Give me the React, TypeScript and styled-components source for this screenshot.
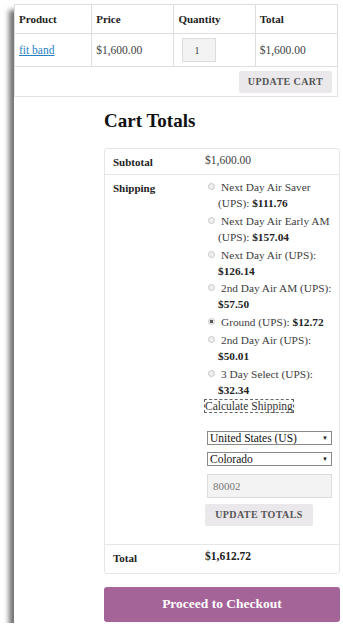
import React from "react";
import styled, { createGlobalStyle } from "styled-components";

const serif = `"Liberation Serif", "DejaVu Serif", serif`;

const GlobalStyle = createGlobalStyle`
  body {
    margin: 0;
    background: #fff;
    font-family: ${serif};
    color: #3d3d3d;
  }
`;

const Frame = styled.div`
  margin: 4px 0 0 14px;
  width: 329px;
  padding-bottom: 1px;
  background: #fff;
  box-shadow: -5px 6px 5px rgba(0, 0, 0, 0.55);
`;

const CartTable = styled.table`
  width: 324px;
  border-collapse: collapse;
  border: 1px solid #e2e2e2;
  font-size: 11.5px;
`;

const HeadCell = styled.th<{ $w: number }>`
  width: ${({ $w }) => $w}px;
  height: 28px;
  padding: 0 4px;
  text-align: left;
  font-size: 11px;
  font-weight: bold;
  color: #222;
  border: 1px solid #dedede;
`;

const Cell = styled.td`
  height: 32px;
  padding: 0 4px;
  border: 1px solid #dedede;
`;

const ProductLink = styled.a`
  color: #2a81c2;
  text-decoration: underline;
`;

const QtyInput = styled.input`
  width: 34px;
  height: 24px;
  box-sizing: border-box;
  margin-left: 4px;
  padding: 0 0 0 11px;
  border: 1px solid #dcdcdc;
  background: #f3f3f3;
  font: 10px ${serif};
  color: #444;
`;

const ActionCell = styled.td`
  height: 29px;
  padding: 0 5px 0 0;
  text-align: right;
`;

const GreyButton = styled.button<{ $w: number }>`
  width: ${({ $w }) => $w}px;
  height: 22px;
  padding: 0;
  border: none;
  border-radius: 2px;
  background: #ebe8ec;
  color: #555;
  font: bold 10px ${serif};
  letter-spacing: 0.4px;
  text-transform: uppercase;
  cursor: pointer;
`;

const Totals = styled.section`
  width: 236px;
  margin: 13px 0 0 90px;
`;

const Heading = styled.h2`
  margin: 0 0 16px;
  font-size: 19px;
  line-height: 22px;
  color: #111;
`;

const TotalsTable = styled.table`
  width: 100%;
  border: 1px solid #e6e6e6;
  border-radius: 3px;
  border-spacing: 0;
  font-size: 11.5px;
`;

const Label = styled.th<{ $last?: boolean }>`
  width: 76px;
  padding: 7px 8px 0;
  vertical-align: top;
  text-align: left;
  font-size: 11px;
  font-weight: bold;
  color: #222;
  border-bottom: ${({ $last }) => ($last ? "none" : "1px solid #e6e6e6")};
`;

const Value = styled.td<{ $last?: boolean; $top?: number; $bottom?: number }>`
  padding: ${({ $top }) => $top ?? 5}px 6px ${({ $bottom }) => $bottom ?? 8}px
    8px;
  vertical-align: top;
  border-bottom: ${({ $last }) => ($last ? "none" : "1px solid #e6e6e6")};
`;

const Methods = styled.ul`
  list-style: none;
  margin: 0;
  padding: 0;
  font-size: 11.3px;
`;

const Method = styled.li`
  padding-left: 13px;
  text-indent: -10px;
  line-height: 16px;
  margin-bottom: 1.8px;
`;

const Radio = styled.span<{ $checked?: boolean }>`
  display: inline-block;
  box-sizing: border-box;
  width: 7px;
  height: 7px;
  margin-right: 6px;
  border-radius: 50%;
  border: 1px solid #c8c8c8;
  background: ${({ $checked }) =>
    $checked ? "radial-gradient(circle, #555 0 1.5px, #eee 2px)" : "#eee"};
  vertical-align: 1px;
`;

const Price = styled.strong`
  color: #222;
`;

const CalcLink = styled.a`
  display: inline-block;
  line-height: 12px;
  color: #333;
  text-decoration: none;
  outline: 1px dashed #666;
`;

const ShipForm = styled.div`
  display: flex;
  flex-direction: column;
  align-items: flex-start;
  margin-top: 19px;
`;

const SelectWrap = styled.div`
  position: relative;
  margin: 0 0 7px 2px;
`;

const Select = styled.select`
  appearance: none;
  display: block;
  width: 125px;
  height: 14px;
  box-sizing: border-box;
  padding: 0 2px;
  border: 1px solid #8a8a8a;
  border-radius: 0;
  background: #fff;
  font: 11.5px/12px ${serif};
  color: #111;
`;

const Arrow = styled.span`
  position: absolute;
  right: 4px;
  top: 0;
  font-size: 6px;
  line-height: 14px;
  color: #222;
  pointer-events: none;
`;

const PostInput = styled.input`
  width: 125px;
  height: 24px;
  box-sizing: border-box;
  margin: 1px 0 6px 2px;
  padding: 0 5px;
  border: 1px solid #dcdcdc;
  background: #f3f3f3;
  font: 11px ${serif};
  color: #777;
`;

const Checkout = styled.button`
  width: 100%;
  height: 35px;
  margin-top: 13px;
  border: none;
  border-radius: 3px;
  background: #a46497;
  color: #fff;
  font: bold 13.5px ${serif};
  cursor: pointer;
`;

const methods = [
  { name: "Next Day Air Saver (UPS):", price: "$111.76" },
  { name: "Next Day Air Early AM (UPS):", price: "$157.04" },
  { name: "Next Day Air (UPS):", price: "$126.14" },
  { name: "2nd Day Air AM (UPS):", price: "$57.50" },
  { name: "Ground (UPS):", price: "$12.72", checked: true },
  { name: "2nd Day Air (UPS):", price: "$50.01" },
  { name: "3 Day Select (UPS):", price: "$32.34" },
];

const App: React.FC = () => {
  return (
    <>
      <GlobalStyle />
      <Frame>
        <CartTable>
          <thead>
            <tr>
              <HeadCell $w={78}>Product</HeadCell>
              <HeadCell $w={82}>Price</HeadCell>
              <HeadCell $w={82}>Quantity</HeadCell>
              <HeadCell $w={82}>Total</HeadCell>
            </tr>
          </thead>
          <tbody>
            <tr>
              <Cell>
                <ProductLink href="#">fit band</ProductLink>
              </Cell>
              <Cell>$1,600.00</Cell>
              <Cell>
                <QtyInput defaultValue="1" />
              </Cell>
              <Cell>$1,600.00</Cell>
            </tr>
            <tr>
              <ActionCell colSpan={4}>
                <GreyButton $w={93}>Update Cart</GreyButton>
              </ActionCell>
            </tr>
          </tbody>
        </CartTable>

        <Totals>
          <Heading>Cart Totals</Heading>
          <TotalsTable>
            <tbody>
              <tr>
                <Label>Subtotal</Label>
                <Value>$1,600.00</Value>
              </tr>
              <tr>
                <Label>Shipping</Label>
                <Value $top={4} $bottom={18}>
                  <Methods>
                    {methods.map((m) => (
                      <Method key={m.name}>
                        <Radio $checked={m.checked} />
                        {m.name} <Price>{m.price}</Price>
                      </Method>
                    ))}
                  </Methods>
                  <CalcLink href="#">Calculate Shipping</CalcLink>
                  <ShipForm>
                    <SelectWrap>
                      <Select defaultValue="US">
                        <option value="US">United States (US)</option>
                      </Select>
                      <Arrow>▼</Arrow>
                    </SelectWrap>
                    <SelectWrap>
                      <Select defaultValue="CO">
                        <option value="CO">Colorado</option>
                      </Select>
                      <Arrow>▼</Arrow>
                    </SelectWrap>
                    <PostInput defaultValue="80002" />
                    <GreyButton $w={108}>Update Totals</GreyButton>
                  </ShipForm>
                </Value>
              </tr>
              <tr>
                <Label $last>Total</Label>
                <Value $last $top={5} $bottom={11}>
                  <Price>$1,612.72</Price>
                </Value>
              </tr>
            </tbody>
          </TotalsTable>
          <Checkout>Proceed to Checkout</Checkout>
        </Totals>
      </Frame>
    </>
  );
};

export default App;
